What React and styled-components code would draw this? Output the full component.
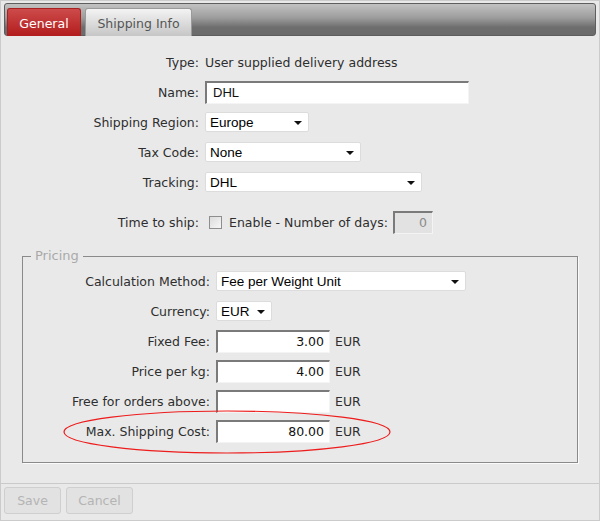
import React from "react";
import styled, { createGlobalStyle } from "styled-components";

const GlobalStyle = createGlobalStyle`
  html, body { margin: 0; padding: 0; background: #ffffff; }
  *, *::before, *::after { box-sizing: border-box; }
`;

const Window = styled.div`
  width: 600px;
  height: 521px;
  border: 1px solid #cbcbcb;
  background: #e9e9e9;
  font-family: "DejaVu Sans", Verdana, sans-serif;
  font-size: 12.5px;
  color: #2e2e2e;
  display: flex;
  flex-direction: column;
`;

const TabBar = styled.div`
  margin: 2px 3px 0 3px;
  height: 33px;
  border: 1px solid #5e5e5e;
  border-radius: 3px;
  background: linear-gradient(#c2c2c2 0%, #9c9c9c 45%, #6e6e6e 75%, #6b6b6b 100%);
  display: flex;
  align-items: flex-end;
  gap: 4px;
  padding-left: 2px;
`;

const Tab = styled.div`
  height: 28px;
  margin-bottom: -1px;
  width: ${(p) => p.$width}px;
  border: 1px solid ${(p) => (p.$active ? "#a82222" : "#9a9a9a")};
  border-bottom: none;
  border-radius: 3px 3px 0 0;
  background: ${(p) =>
    p.$active
      ? "linear-gradient(#cd4b4b, #b31c1c)"
      : "linear-gradient(#f3f3f3, #c6c6c6)"};
  color: ${(p) => (p.$active ? "#ffffff" : "#555")};
  display: flex;
  align-items: center;
  justify-content: center;
  padding-top: 1px;
`;

const Content = styled.div`
  flex: 1;
  padding-top: 11px;
  display: flex;
  flex-direction: column;
`;

const Row = styled.div`
  position: relative;
  display: flex;
  align-items: center;
  height: 30px;
  margin-top: ${(p) => p.$gap || 0}px;
`;

const Label = styled.span`
  width: ${(p) => p.$width}px;
  margin-right: 6px;
  text-align: right;
  flex-shrink: 0;
`;

const Text = styled.span`
  color: #2e2e2e;
`;

const TextInput = styled.div`
  width: ${(p) => p.$width}px;
  height: 23px;
  margin-left: ${(p) => p.$offset || 0}px;
  background: ${(p) => (p.$disabled ? "#e2e2e2" : "#ffffff")};
  border-style: solid;
  border-width: 2px 1px 1px 2px;
  border-color: #7a7a7a #f4f4f4 #f4f4f4 #7a7a7a;
  display: flex;
  align-items: center;
  justify-content: ${(p) => (p.$right ? "flex-end" : "flex-start")};
  padding: 0 5px 0 6px;
  font-family: ${(p) =>
    p.$sans ? '"Liberation Sans", Arial, sans-serif' : '"DejaVu Sans", Verdana, sans-serif'};
  font-size: ${(p) => (p.$sans ? "13px" : "12.5px")};
  color: ${(p) => (p.$disabled ? "#8a8a8a" : "#111")};
`;

const Select = styled.div`
  width: ${(p) => p.$width}px;
  height: 20px;
  background: #ffffff;
  border: 1px solid #dcdcdc;
  border-radius: 2px;
  display: flex;
  align-items: center;
  justify-content: space-between;
  padding: 0 6px 0 4px;
  font-family: "Liberation Sans", Arial, sans-serif;
  font-size: 13.5px;
  color: #000;
`;

const Arrow = styled.span`
  width: 0;
  height: 0;
  border-left: 4px solid transparent;
  border-right: 4px solid transparent;
  border-top: 4px solid #111;
  margin-top: 2px;
`;

const Checkbox = styled.span`
  width: 13px;
  height: 13px;
  margin: 0 7px 0 4px;
  border: 1px solid #8e8e8e;
  background: linear-gradient(135deg, #dcdcdc, #f6f6f6);
  display: inline-block;
`;

const Unit = styled.span`
  margin-left: 5px;
  color: #2e2e2e;
`;

const Fieldset = styled.fieldset`
  margin: 11px 21px 0 21px;
  padding: 2px 0 16px 0;
  border: 1px solid #8a8a8a;
  box-shadow: 1px 1px 0 #fbfbfb;
  min-width: 0;
`;

const Legend = styled.legend`
  margin-left: 8px;
  padding: 0 4px;
  color: #a9a9a9;
  font-size: 13px;
  line-height: 16px;
`;

const Highlight = styled.svg`
  position: absolute;
  left: 40px;
  top: -6px;
  overflow: visible;
  pointer-events: none;
`;

const Footer = styled.div`
  height: 37px;
  border-top: 1px solid #cacaca;
  padding: 3px 3px 0 3px;
  display: flex;
  gap: 5px;
  align-items: flex-start;
`;

const Button = styled.div`
  width: ${(p) => p.$width}px;
  height: 27px;
  background: #e2e2e2;
  border: 1px solid #cfcfcf;
  border-radius: 3px;
  color: #b4b4b4;
  display: flex;
  align-items: center;
  justify-content: center;
`;

const TOP_LABEL = 198;
const PRICE_LABEL = 187;

export default function App() {
  return (
    <>
      <GlobalStyle />
      <Window>
        <TabBar>
          <Tab $active $width={74}>General</Tab>
          <Tab $width={107}>Shipping Info</Tab>
        </TabBar>
        <Content>
          <Row>
            <Label $width={TOP_LABEL}>Type:</Label>
            <Text>User supplied delivery address</Text>
          </Row>
          <Row>
            <Label $width={TOP_LABEL}>Name:</Label>
            <TextInput $width={264} $sans>DHL</TextInput>
          </Row>
          <Row>
            <Label $width={TOP_LABEL}>Shipping Region:</Label>
            <Select $width={104}>
              Europe
              <Arrow />
            </Select>
          </Row>
          <Row>
            <Label $width={TOP_LABEL}>Tax Code:</Label>
            <Select $width={156}>
              None
              <Arrow />
            </Select>
          </Row>
          <Row>
            <Label $width={TOP_LABEL}>Tracking:</Label>
            <Select $width={217}>
              DHL
              <Arrow />
            </Select>
          </Row>
          <Row $gap={10}>
            <Label $width={TOP_LABEL}>Time to ship:</Label>
            <Checkbox />
            <Text>Enable - Number of days:</Text>
            <TextInput $width={40} $right $disabled $offset={5}>
              0
            </TextInput>
          </Row>
          <Fieldset>
            <Legend>Pricing</Legend>
            <Row>
              <Label $width={PRICE_LABEL}>Calculation Method:</Label>
              <Select $width={250}>
                Fee per Weight Unit
                <Arrow />
              </Select>
            </Row>
            <Row>
              <Label $width={PRICE_LABEL}>Currency:</Label>
              <Select $width={56}>
                EUR
                <Arrow />
              </Select>
            </Row>
            <Row>
              <Label $width={PRICE_LABEL}>Fixed Fee:</Label>
              <TextInput $width={114} $right>3.00</TextInput>
              <Unit>EUR</Unit>
            </Row>
            <Row>
              <Label $width={PRICE_LABEL}>Price per kg:</Label>
              <TextInput $width={114} $right>4.00</TextInput>
              <Unit>EUR</Unit>
            </Row>
            <Row>
              <Label $width={PRICE_LABEL}>Free for orders above:</Label>
              <TextInput $width={114} $right />
              <Unit>EUR</Unit>
            </Row>
            <Row>
              <Label $width={PRICE_LABEL}>Max. Shipping Cost:</Label>
              <TextInput $width={114} $right>80.00</TextInput>
              <Unit>EUR</Unit>
              <Highlight width="328" height="44" viewBox="0 0 328 44">
                <ellipse cx="164" cy="22" rx="163" ry="21" fill="none" stroke="#ee1c1c" strokeWidth="1.2" />
              </Highlight>
            </Row>
          </Fieldset>
        </Content>
        <Footer>
          <Button $width={57}>Save</Button>
          <Button $width={67}>Cancel</Button>
        </Footer>
      </Window>
    </>
  );
}
